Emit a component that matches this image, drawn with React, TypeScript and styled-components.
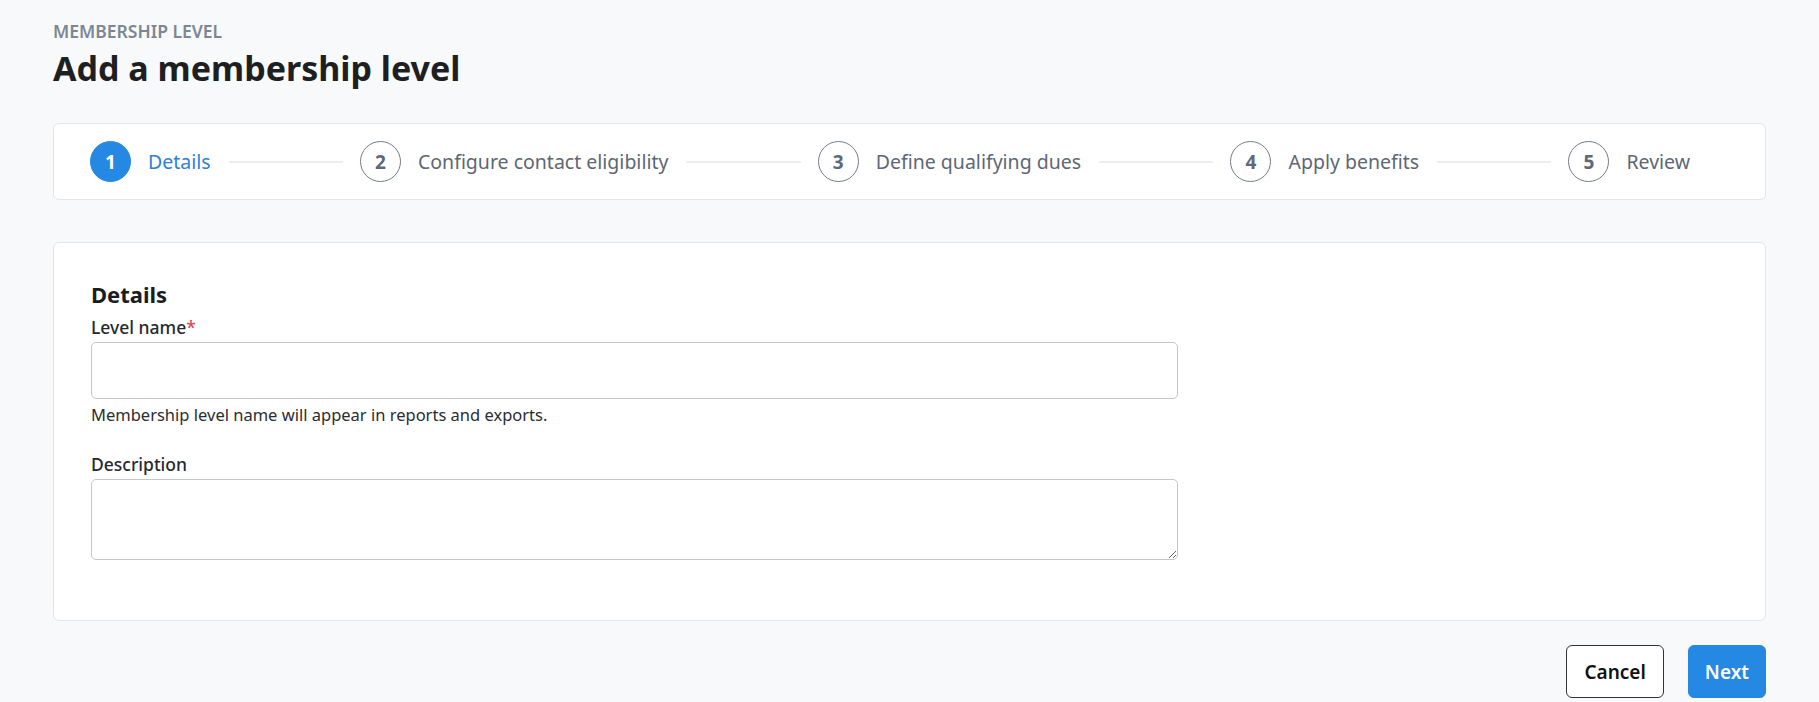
import React from 'react'
import styled, { createGlobalStyle } from 'styled-components'

const GlobalStyle = createGlobalStyle`
  html, body {
    margin: 0;
    padding: 0;
    background: #f8f9fa;
    font-family: 'Noto Sans', 'Open Sans', Arial, sans-serif;
    color: #212529;
  }
  * { box-sizing: border-box; }
`

const Page = styled.div`
  padding: 19px 53px 0 53px;
`

const Eyebrow = styled.div`
  font-size: 17.5px;
  font-weight: 600;
  line-height: 24px;
  color: #7c8793;
  text-transform: uppercase;
`

const Title = styled.h1`
  margin: 2px 0 0 0;
  font-size: 34px;
  font-weight: 700;
  line-height: 46px;
  color: #1e1f21;
`

const Card = styled.div`
  background: #fff;
  border: 1px solid #e2e5e9;
  border-radius: 6px;
`

const StepperCard = styled(Card)`
  margin-top: 32px;
  height: 77px;
  display: flex;
  align-items: center;
  padding: 0 75px 0 36px;
`

const Step = styled.div`
  display: flex;
  align-items: center;
  gap: 17px;
  flex-shrink: 0;
`

const Circle = styled.div<{ $active?: boolean }>`
  width: 41px;
  height: 41px;
  border-radius: 50%;
  display: flex;
  align-items: center;
  justify-content: center;
  font-size: 19px;
  font-weight: 700;
  background: ${(p) => (p.$active ? '#2589e3' : '#fff')};
  color: ${(p) => (p.$active ? '#fff' : '#5d6878')};
  border: 1px solid ${(p) => (p.$active ? '#2589e3' : '#737d88')};
`

const StepLabel = styled.span<{ $active?: boolean }>`
  font-size: 19.5px;
  color: ${(p) => (p.$active ? '#2d80d6' : '#5d6773')};
`

const Connector = styled.div`
  flex: 1;
  height: 2px;
  background: #eceef0;
  margin: 0 17px 0 18px;
`

const DetailsCard = styled(Card)`
  margin-top: 42px;
  padding: 36px 37px 60px 37px;
`

const SectionTitle = styled.h2`
  margin: 0 0 5px 0;
  font-size: 22px;
  font-weight: 700;
  line-height: 30px;
  color: #1b1c1e;
`

const Field = styled.div`
  width: 1087px;
  & + & {
    margin-top: 24px;
  }
`

const Label = styled.label`
  display: block;
  font-size: 17.5px;
  font-weight: 500;
  line-height: 26px;
  color: #26292d;
  margin-bottom: 2px;
`

const Required = styled.span`
  color: #e0474c;
`

const Input = styled.input`
  display: block;
  width: 100%;
  height: 57px;
  border: 1px solid #c3c7cc;
  border-radius: 5px;
  background: #fff;
  font: inherit;
`

const TextArea = styled.textarea`
  display: block;
  width: 100%;
  height: 81px;
  border: 1px solid #c3c7cc;
  border-radius: 5px;
  background: #fff;
  font: inherit;
  resize: vertical;
`

const Help = styled.div`
  margin-top: 4px;
  font-size: 16.5px;
  line-height: 24px;
  color: #2a2d31;
`

const Footer = styled.div`
  display: flex;
  justify-content: flex-end;
  gap: 24px;
  margin-top: 24px;
`

const Button = styled.button<{ $primary?: boolean }>`
  height: 53px;
  padding: 0 ${(p) => (p.$primary ? '16px' : '17px')};
  border-radius: 6px;
  font-family: inherit;
  font-size: 19px;
  font-weight: 600;
  cursor: pointer;
  background: ${(p) => (p.$primary ? '#2589e3' : '#fff')};
  color: ${(p) => (p.$primary ? '#fff' : '#111')};
  border: 1px solid ${(p) => (p.$primary ? '#2589e3' : '#333')};
`

const steps = ['Details', 'Configure contact eligibility', 'Define qualifying dues', 'Apply benefits', 'Review']

const App: React.FC = () => {
  const current = 0
  return (
    <>
      <GlobalStyle />
      <Page>
        <Eyebrow>Membership level</Eyebrow>
        <Title>Add a membership level</Title>
        <StepperCard>
          {steps.map((s, i) => (
            <React.Fragment key={s}>
              <Step>
                <Circle $active={i === current}>{i + 1}</Circle>
                <StepLabel $active={i === current}>{s}</StepLabel>
              </Step>
              {i < steps.length - 1 && <Connector />}
            </React.Fragment>
          ))}
        </StepperCard>
        <DetailsCard>
          <SectionTitle>Details</SectionTitle>
          <Field>
            <Label>
              Level name<Required>*</Required>
            </Label>
            <Input />
            <Help>Membership level name will appear in reports and exports.</Help>
          </Field>
          <Field>
            <Label>Description</Label>
            <TextArea />
          </Field>
        </DetailsCard>
        <Footer>
          <Button>Cancel</Button>
          <Button $primary>Next</Button>
        </Footer>
      </Page>
    </>
  )
}

export default App
